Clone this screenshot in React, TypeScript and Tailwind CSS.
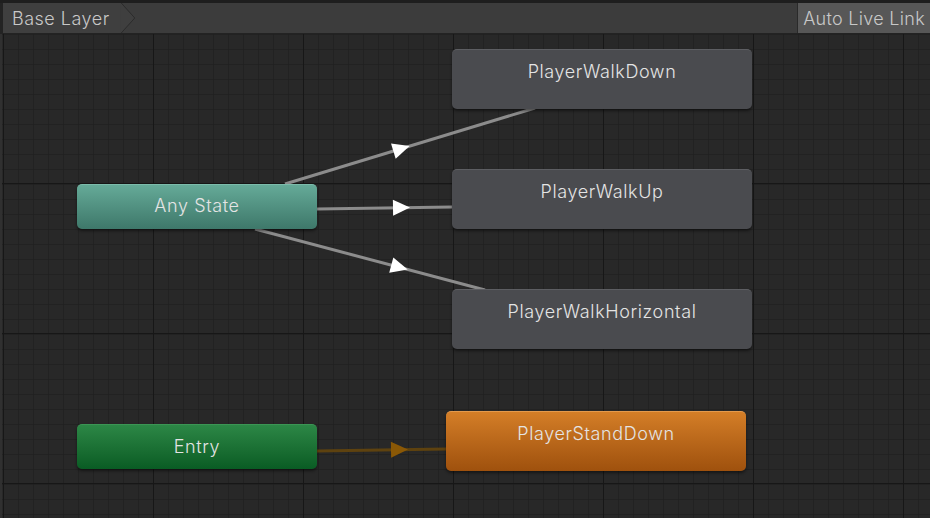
import React from 'react';

type Node = {
  name: string;
  x: number;
  y: number;
  w: number;
  h: number;
  kind: 'any' | 'state' | 'entry' | 'default';
};

// canvas-relative coords (canvas starts at y=34)
const nodes: Node[] = [
  { name: 'PlayerWalkDown', x: 452, y: 15, w: 300, h: 60, kind: 'state' },
  { name: 'PlayerWalkUp', x: 452, y: 135, w: 300, h: 60, kind: 'state' },
  { name: 'PlayerWalkHorizontal', x: 452, y: 255, w: 300, h: 60, kind: 'state' },
  { name: 'Any State', x: 77, y: 150, w: 240, h: 45, kind: 'any' },
  { name: 'Entry', x: 77, y: 390, w: 240, h: 45, kind: 'entry' },
  { name: 'PlayerStandDown', x: 446, y: 377, w: 300, h: 60, kind: 'default' },
];

const kindClass: Record<Node['kind'], string> = {
  any: 'bg-gradient-to-b from-[#65aa98] to-[#3e786a] border-t border-[#7cbcab] items-center pb-[3px]',
  state: 'bg-[#4a4b4f] border-t border-[#5d5e62] items-start pt-[8px]',
  entry: 'bg-gradient-to-b from-[#2c8746] to-[#095c24] border-t border-[#3b9554] items-center pb-[2px]',
  default: 'bg-gradient-to-b from-[#d47e27] to-[#9f510d] border-t border-[#e39a4d] items-start pt-[8px]',
};

type Edge = { x1: number; y1: number; x2: number; y2: number; ax: number; color: string; head: string };

const edges: Edge[] = [
  { x1: 285, y1: 150, x2: 535, y2: 74, ax: 401, color: '#8c8c8c', head: '#ffffff' },
  { x1: 317, y1: 175, x2: 452, y2: 173, ax: 401, color: '#8c8c8c', head: '#ffffff' },
  { x1: 255, y1: 195, x2: 485, y2: 256, ax: 399, color: '#8c8c8c', head: '#ffffff' },
  { x1: 317, y1: 417, x2: 446, y2: 415, ax: 399, color: '#5e420f', head: '#8a5806' },
];

function Arrow({ e }: { e: Edge }) {
  const t = (e.ax - e.x1) / (e.x2 - e.x1);
  const my = e.y1 + (e.y2 - e.y1) * t;
  const ang = (Math.atan2(e.y2 - e.y1, e.x2 - e.x1) * 180) / Math.PI;
  return (
    <g>
      <line x1={e.x1} y1={e.y1} x2={e.x2} y2={e.y2} stroke={e.color} strokeWidth={3} />
      <polygon points="-8,-8 9,0 -8,8" fill={e.head} transform={`translate(${e.ax} ${my}) rotate(${ang})`} />
    </g>
  );
}

export default function App() {
  return (
    <div className="w-[930px] h-[518px] bg-[#282828] flex flex-col overflow-hidden font-['Inter','Liberation_Sans',sans-serif] font-light">
      {/* Toolbar */}
      <div className="h-[34px] bg-[#1e1e1e] pt-[3px] flex shrink-0">
        <div className="w-[3px] bg-[#232323]" />
        <div className="flex-1 flex bg-[#3c3c3c] border-b border-[#232323]">
          <div className="relative flex items-center h-full pl-[9px] pr-[10px] bg-[#3f3f3f] text-[18px] tracking-[0.5px] text-[#c8c8c8]">
            Base Layer
            <svg className="absolute left-full top-0 h-full" width="16" height="31" viewBox="0 0 16 31">
              <polygon points="0,0 1,0 15,15.5 1,31 0,31" fill="#3f3f3f" />
              <polyline points="1,0 15,15.5 1,31" fill="none" stroke="#2a2a2a" strokeWidth="1" />
            </svg>
          </div>
          <div className="flex-1" />
          <div className="flex items-center h-full px-[5px] bg-[#575757] border-l border-[#2a2a2a] text-[18px] tracking-[0.3px] text-[#c8c8c8]">
            Auto Live Link
          </div>
        </div>
      </div>

      {/* Graph canvas */}
      <div className="relative flex-1">
        <svg className="absolute inset-0" width="930" height="484">
          <defs>
            <pattern id="minor" x="3" y="0" width="15" height="15" patternUnits="userSpaceOnUse">
              <path d="M0 0 L0 15 M0 0 L15 0" stroke="#1f1f1f" strokeWidth="1.5" fill="none" />
            </pattern>
            <pattern id="major" x="3" y="-1" width="150" height="150" patternUnits="userSpaceOnUse">
              <path d="M0 0 L0 150 M0 0 L150 0" stroke="#171717" strokeWidth="2" fill="none" />
            </pattern>
          </defs>
          <rect width="930" height="484" fill="url(#minor)" />
          <rect width="930" height="484" fill="url(#major)" />
          <rect x="0" y="0" width="2" height="484" fill="#303030" />
          {edges.map((e, i) => (
            <Arrow key={i} e={e} />
          ))}
        </svg>

        {nodes.map((n) => (
          <div
            key={n.name}
            className={`absolute flex justify-center rounded-[5px] shadow-[0_2px_3px_rgba(0,0,0,0.45)] text-[18px] tracking-[0.6px] text-[#e4e4e4] ${kindClass[n.kind]}`}
            style={{ left: n.x, top: n.y, width: n.w, height: n.h }}
          >
            {n.name}
          </div>
        ))}
      </div>
    </div>
  );
}
